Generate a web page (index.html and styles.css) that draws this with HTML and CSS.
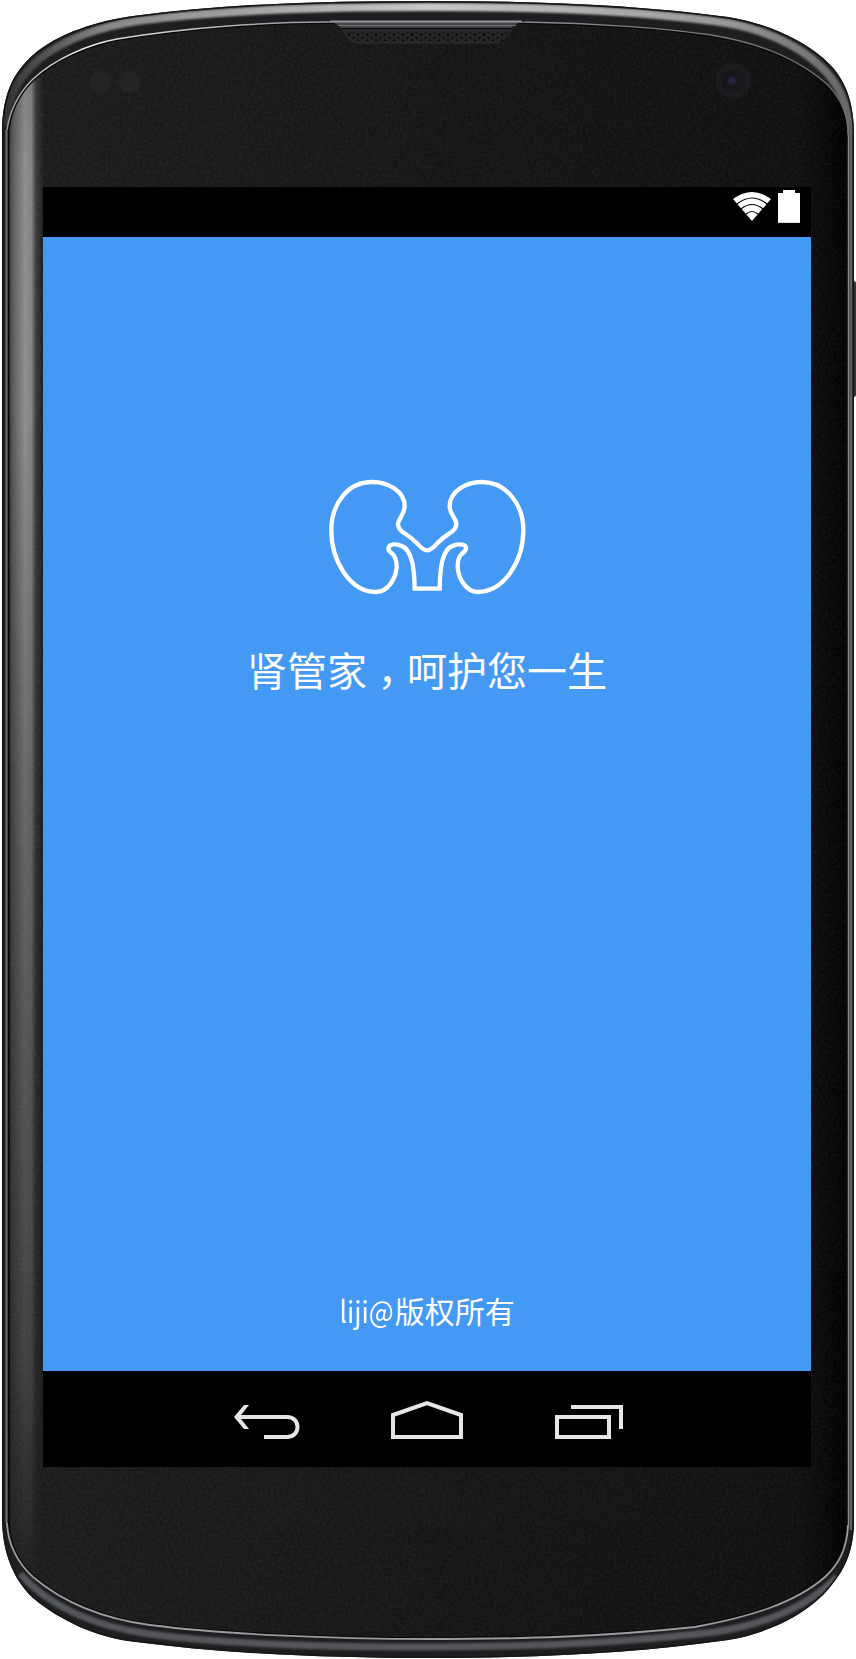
FILE: index.html
```html
<!DOCTYPE html>
<html lang="zh-CN">
<head>
<meta charset="utf-8">
<title>肾管家</title>
<link rel="stylesheet" href="styles.css">
</head>
<body>
<div class="phone">
  <svg class="shell" viewBox="0 0 856 1659" aria-hidden="true">
    <defs>
      <path id="outer" d="M2 130C3 95 12 74 33 55C58 33 98 21 133 16C230 3 330 1 428 1C526 1 630 4 728 17C765 23 800 38 823 58C844 76 853 98 854 130V1520C854 1555 842 1575 823 1595C795 1622 758 1635 728 1640C630 1654 526 1658 428 1658C330 1658 225 1654 128 1641C96 1636 62 1622 33 1598C12 1578 2 1550 2 1517Z"/>
      <path id="inner" d="M7.500 130C10 110 18 94 32 80C55 58 90 44 117 39C190 27 270 22 327 22H523C600 23 670 29 711 35C755 42 795 56 828 85C842 100 848 115 848 135V1525C847 1550 838 1565 825 1577C795 1603 750 1617 695 1627C600 1637 520 1639 428 1639C330 1639 220 1634 150 1625C105 1619 65 1604 33 1577C17 1562 8 1545 8 1523Z"/>
      <clipPath id="outerClip"><use href="#outer"/></clipPath>
      <clipPath id="innerClip"><use href="#inner"/></clipPath>
      <linearGradient id="face"><stop offset="0" stop-color="#1c1c1c"/><stop offset=".5" stop-color="#161616"/><stop offset=".94" stop-color="#111"/><stop offset="1" stop-color="#010101"/></linearGradient>
      <linearGradient id="edge" x1="7" x2="43" gradientUnits="userSpaceOnUse"><stop offset="0" stop-color="#303030"/><stop offset=".2" stop-color="#606060"/><stop offset=".5" stop-color="#8e8e8e"/><stop offset=".68" stop-color="#828282"/><stop offset=".8" stop-color="#3c3c3c"/><stop offset="1" stop-color="#1e1e1e"/></linearGradient>
      <linearGradient id="fade" x2="0" y2="1"><stop offset="0" stop-color="#ccc"/><stop offset=".1" stop-color="#fff"/><stop offset=".26" stop-color="#fff"/><stop offset=".5" stop-color="#aaa"/><stop offset=".85" stop-color="#555"/><stop offset="1" stop-color="#000"/></linearGradient>
      <mask id="edgeMask"><rect width="60" height="1600" fill="url(#fade)"/></mask>
      <linearGradient id="topLight"><stop offset="0" stop-color="#333"/><stop offset=".12" stop-color="#888"/><stop offset=".5" stop-color="#c8c8c8"/><stop offset=".85" stop-color="#999"/><stop offset="1" stop-color="#666"/></linearGradient>
      <linearGradient id="rimTop"><stop offset="0" stop-color="#999"/><stop offset=".08" stop-color="#eee"/><stop offset=".3" stop-color="#a4a7ad"/><stop offset="1" stop-color="#66686b"/></linearGradient>
      <pattern id="holes" x="347" y="33" width="9" height="6" patternUnits="userSpaceOnUse"><circle cx="2" cy="1.500" r="1.200" fill="#050505"/><circle cx="6.500" cy="5" r="1" fill="#050505"/></pattern>
      <filter id="soft"><feGaussianBlur stdDeviation="1.100"/></filter>
      <filter id="grain"><feTurbulence type="fractalNoise" baseFrequency=".35" numOctaves="2" seed="3"/><feColorMatrix values="0 0 0 0 1 0 0 0 0 1 0 0 0 0 1 .12 0 0 0 -.035"/></filter>
    </defs>
    <rect x="852" y="281" width="4" height="116" rx="2" fill="#333"/>
    <use href="#outer" fill="#1d1e1f"/>
    <g clip-path="url(#outerClip)" fill="none">
      <path d="M5 125C8 96 18 78 38 60C65 38 103 26 137 21C230 9 330 7 428 7C526 7 630 9 727 23C762 29 796 44 818 64C840 83 848 105 851 135" stroke="url(#topLight)" stroke-width="8" filter="url(#soft)"/>
      <path d="M851 120V1530" stroke="#5c5e5f" stroke-width="3"/>
      <path d="M20 1574C55 1612 105 1628 150 1634C230 1645 340 1647 428 1647C530 1647 630 1642 715 1632C768 1624 808 1606 837 1577" stroke="#54575a" stroke-width="7" filter="url(#soft)"/>
      <use href="#outer" stroke="#171717" stroke-width="3"/>
    </g>
    <use href="#inner" fill="url(#face)"/>
    <g clip-path="url(#innerClip)">
      <rect x="7" y="60" width="37" height="1540" fill="url(#edge)" mask="url(#edgeMask)"/>
      <rect width="856" height="1659" filter="url(#grain)" opacity=".65"/>
      <use href="#inner" fill="none" stroke="#080808" stroke-width="4"/>
    </g>
    <g fill="none" stroke-width="1.500">
      <path d="M7 130C10 110 18 94 32 80C55 58 90 44 117 39C190 27 270 22 327 22H523C600 23 670 29 711 35C755 42 795 56 828 85C842 100 848 115 848 135" stroke="url(#rimTop)"/>
      <path d="M6.500 130V1523" stroke="#70726c" stroke-width="2"/>
      <path d="M848.500 135V1525" stroke="#85878a"/>
      <path d="M848 1525C847 1550 838 1565 825 1577C795 1603 750 1617 695 1627C600 1637 520 1639 428 1639C330 1639 220 1634 150 1625C105 1619 65 1604 33 1577C17 1562 8 1545 7 1523" stroke="#9a9ca0" stroke-width="1.800"/>
    </g>
    <path d="M328 21C338 22 340 28 345 35C350 42 352 44 360 44H490C502 44 504 41 509 34C515 26 516 22 527 21Z" fill="#252525"/>
    <path d="M330 22Q337 23 341 28H511Q515 23 524 22Z" fill="#44464a"/>
    <path d="M330 21.500H522" stroke="#94969b" stroke-width="2"/>
    <path d="M338 25.500H516" stroke="#6c6e73"/>
    <path d="M341 28.500H511" stroke="#090909"/>
    <path d="M346 32H509L503 41H352Z" fill="url(#holes)"/>
    <g fill="#242424"><circle cx="100" cy="82" r="11"/><circle cx="130" cy="82" r="11"/></g>
    <circle cx="733" cy="81" r="18" fill="#1b1a1c"/><circle cx="733" cy="81" r="11" fill="#17161a"/><circle cx="732" cy="81" r="4" fill="#252142" filter="url(#soft)"/>
  </svg>
  <main class="screen">
    <header class="status">
      <svg class="wifi" viewBox="0 0 40 30"><path d="M1 8Q20-6 39 8L20 30Z" fill="#fff"/><path d="M5 13Q20 1 35 13M9 18Q20 9 31 18M14 23Q20 18 26 23" fill="none" stroke="#000" stroke-width="1.200"/></svg>
      <svg class="battery" viewBox="0 0 22 33"><path d="M0 3H5V0H17V3H22V33H0Z" fill="#fff"/><path d="M0 32.500H22" stroke="#ddd"/></svg>
    </header>
    <section class="splash">
      <svg class="logo" viewBox="0 0 236 150"><g transform="scale(.333333)" fill="none" stroke="#fff" stroke-width="13" stroke-linejoin="miter"><path d="M351 271C338 271 333 262 321 250C303 232 298 229 285 221C271 213 263 204 264 190C266 176 284 161 284 139C284 92 232 66 187 66C112 66 64 132 64 211C64 304 121 396 197 396C237 396 258 351 260 321C260 302 258 292 248 282C239 275 233 271 236 262C240 250 260 252 273 257C307 269 313 326 314 386H389C390 326 395 269 429 257C442 252 464 250 468 262C471 271 463 275 454 283C445 292 443 303 443 322C445 351 466 396 503 396C583 396 640 302 640 211C640 132 589 66 514 66C471 66 419 92 419 139C419 161 437 175 439 190C440 204 431 213 417 221C405 229 399 232 382 250C370 262 365 271 351 271Z"/></g></svg>
      <h1 class="slogan">肾管家<span class="comma">，</span>呵护您一生</h1>
      <p class="copyright"><span class="owner">liji@</span>版权所有</p>
    </section>
    <nav class="navbar">
      <svg viewBox="0 0 440 80" fill="none" stroke="#e6e6e6" stroke-width="4"><path d="M28 37H77C91 37 91 57 77 57H54"/><path d="M24 37L34 25H39L29.500 37L39 49H34Z" fill="#e6e6e6" stroke="none"/><path d="M183 35L217 23L251 35V57H183Z"/><path d="M347 37H399V57H347ZM361 27H411V49"/></svg>
    </nav>
  </main>
</div>
</body>
</html>
```
FILE: styles.css
```css
body { margin: 0; background: #fff; }
.phone { display: grid; width: 856px; height: 1659px; overflow: hidden; }
.shell { grid-area: 1 / 1; width: 856px; height: 1659px; }
.screen { grid-area: 1 / 1; z-index: 1; display: flex; flex-direction: column; width: 768px; height: 1280px; margin: 187px 0 0 43px; background: #000; }
.status { display: flex; justify-content: flex-end; gap: 6px; height: 50px; box-sizing: border-box; padding: 3px 11px 0 0; }
.wifi { width: 40px; height: 30px; margin-top: 1px; }
.battery { width: 22px; height: 33px; }
.splash { display: flex; flex: 1; flex-direction: column; align-items: center; background: #4499f5; color: #fff; font-family: "Noto Sans CJK SC", sans-serif; }
.logo { width: 236px; height: 150px; margin: 223px 0 0 1px; }
.slogan { display: flex; margin: 29px 0 0; font-size: 40px; line-height: 60px; font-weight: 400; white-space: nowrap; }
.comma { width: 40px; padding-top: 11px; box-sizing: border-box; height: 60px; font-family: "Noto Sans CJK TC", sans-serif; }
.comma:lang(zh) { font-feature-settings: normal; }
.copyright { margin: auto 0 39px; font-size: 30px; line-height: 44px; white-space: nowrap; }
.owner { display: inline-block; margin: 0 1px 0 -7px; transform: scaleX(.88); transform-origin: right; }
.navbar { display: flex; height: 96px; box-sizing: border-box; padding: 9px 0 0 167px; }
.navbar svg { width: 440px; height: 80px; }
```
